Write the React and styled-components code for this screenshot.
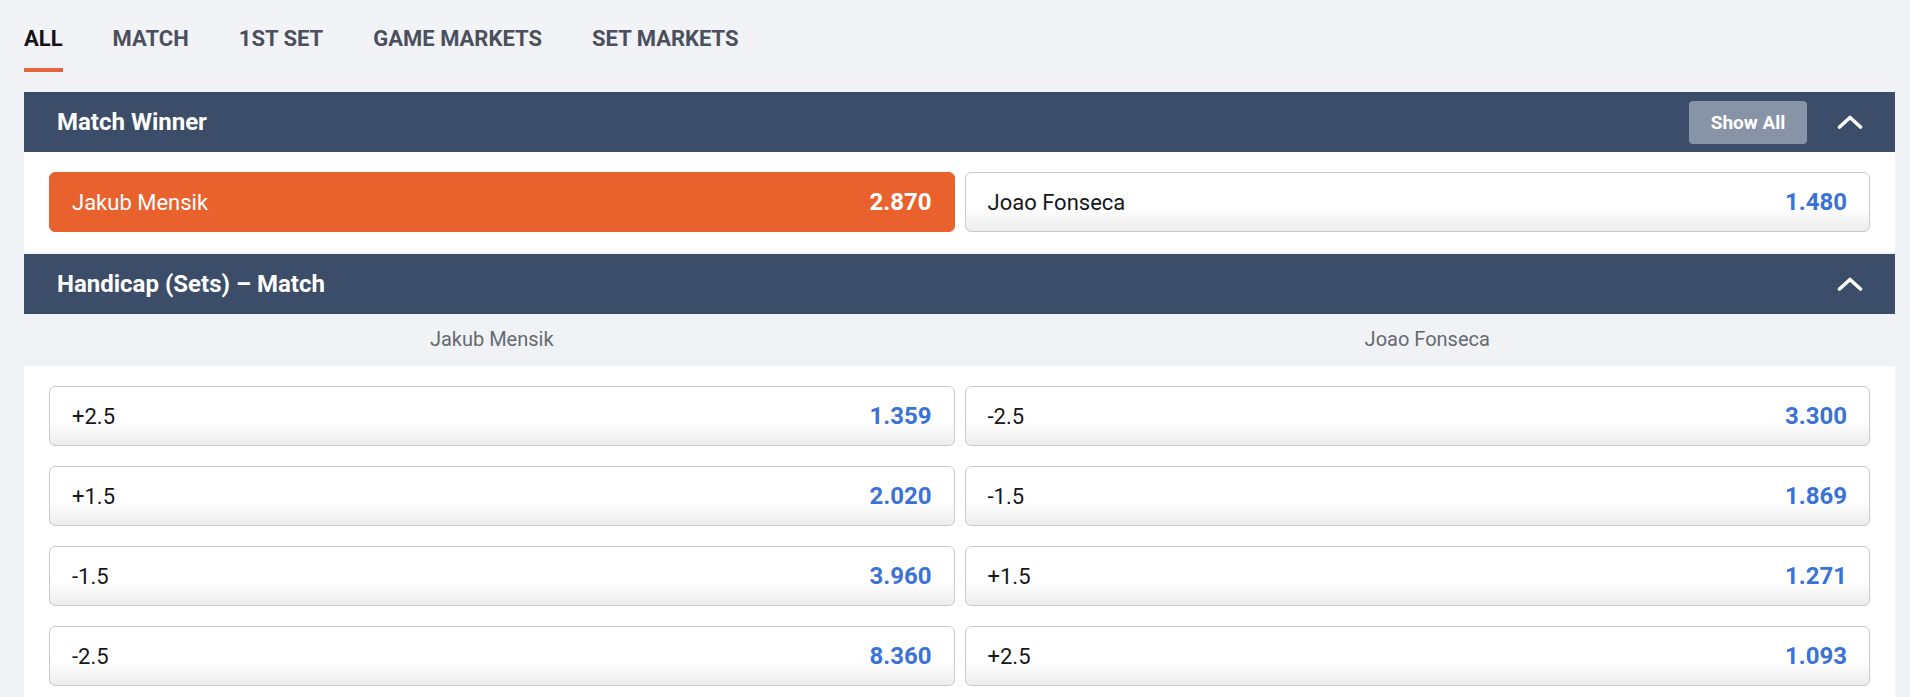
import React from "react";
import styled, { createGlobalStyle } from "styled-components";

const GlobalStyle = createGlobalStyle`
  html, body {
    margin: 0;
    padding: 0;
    background: #f2f3f7;
    font-family: Roboto, "Liberation Sans", Arial, sans-serif;
  }
`;

const tabs = ["ALL", "MATCH", "1ST SET", "GAME MARKETS", "SET MARKETS"];

const handicapRows = [
  { home: "+2.5", homeOdds: "1.359", away: "-2.5", awayOdds: "3.300" },
  { home: "+1.5", homeOdds: "2.020", away: "-1.5", awayOdds: "1.869" },
  { home: "-1.5", homeOdds: "3.960", away: "+1.5", awayOdds: "1.271" },
  { home: "-2.5", homeOdds: "8.360", away: "+2.5", awayOdds: "1.093" },
];

const Chevron = () => (
  <ChevronIcon viewBox="0 0 26 14" aria-hidden="true">
    <polyline points="2.5,12 13,2.5 23.5,12" />
  </ChevronIcon>
);

const OddsButton = ({ label, odds, selected }) => (
  <StyledOdds $selected={selected}>
    <span className="label">{label}</span>
    <span className="odds">{odds}</span>
  </StyledOdds>
);

const Market = ({ title, showAll, children }) => (
  <Section>
    <MarketHeader>
      <h2>{title}</h2>
      <div className="tools">
        {showAll && <ShowAllButton>Show All</ShowAllButton>}
        <Chevron />
      </div>
    </MarketHeader>
    {children}
  </Section>
);

const App = () => {
  return (
    <>
      <GlobalStyle />
      <Page>
        <TabBar>
          {tabs.map((tab, i) => (
            <Tab key={tab} $active={i === 0}>
              {tab}
            </Tab>
          ))}
        </TabBar>

        <Market title="Match Winner" showAll>
          <OddsGrid>
            <OddsButton label="Jakub Mensik" odds="2.870" selected />
            <OddsButton label="Joao Fonseca" odds="1.480" />
          </OddsGrid>
        </Market>

        <Market title="Handicap (Sets) – Match">
          <ColumnLabels>
            <span>Jakub Mensik</span>
            <span>Joao Fonseca</span>
          </ColumnLabels>
          <OddsGrid>
            {handicapRows.map((row) => (
              <React.Fragment key={row.home}>
                <OddsButton label={row.home} odds={row.homeOdds} />
                <OddsButton label={row.away} odds={row.awayOdds} />
              </React.Fragment>
            ))}
          </OddsGrid>
        </Market>
      </Page>
    </>
  );
};

const Page = styled.div`
  padding: 0 15px 0 24px;
`;

const TabBar = styled.nav`
  display: flex;
  gap: 50px;
  margin-bottom: 20px;
`;

const Tab = styled.div`
  padding: 26px 0 16px;
  line-height: 26px;
  font-size: 22px;
  font-weight: 700;
  color: ${(p) => (p.$active ? "#111318" : "#4b505c")};
  border-bottom: 4px solid ${(p) => (p.$active ? "#e8643a" : "transparent")};
  cursor: pointer;
`;

const Section = styled.section`
  background: #fff;
  margin-bottom: 2px;
`;

const MarketHeader = styled.header`
  display: flex;
  align-items: center;
  justify-content: space-between;
  height: 60px;
  padding: 0 32px 0 33px;
  background: #3b4d69;
  color: #fff;

  h2 {
    margin: 0;
    font-size: 24px;
    font-weight: 700;
  }

  .tools {
    display: flex;
    align-items: center;
    gap: 30px;
  }
`;

const ShowAllButton = styled.button`
  width: 118px;
  height: 43px;
  border: none;
  border-radius: 4px;
  background: #8794a7;
  color: #fff;
  font-family: inherit;
  font-size: 19px;
  font-weight: 700;
  cursor: pointer;
`;

const ChevronIcon = styled.svg`
  width: 26px;
  height: 14px;
  fill: none;
  stroke: #fff;
  stroke-width: 3.6;
  stroke-linecap: round;
  stroke-linejoin: round;
`;

const ColumnLabels = styled.div`
  display: grid;
  grid-template-columns: 1fr 1fr;
  height: 52px;
  align-items: center;
  background: #f0f2f5;
  font-size: 20px;
  color: #666a70;
  text-align: center;
  padding-bottom: 2px;
  box-sizing: border-box;
`;

const OddsGrid = styled.div`
  display: grid;
  grid-template-columns: 1fr 1fr;
  column-gap: 10px;
  row-gap: 20px;
  padding: 20px 25px;
`;

const StyledOdds = styled.div`
  display: flex;
  align-items: center;
  justify-content: space-between;
  height: 60px;
  box-sizing: border-box;
  padding: 0 22px;
  border-radius: 6px;
  border: 1.5px solid ${(p) => (p.$selected ? "#e9622d" : "#c9cacc")};
  background: ${(p) =>
    p.$selected
      ? "#e9622d"
      : "linear-gradient(180deg, #ffffff 0%, #ffffff 60%, #ececec 100%)"};
  cursor: pointer;

  .label {
    font-size: 22px;
    color: ${(p) => (p.$selected ? "#fff" : "#15171a")};
  }

  .odds {
    font-size: 24px;
    font-weight: 700;
    color: ${(p) => (p.$selected ? "#fff" : "#3a72d6")};
  }
`;

export default App;
